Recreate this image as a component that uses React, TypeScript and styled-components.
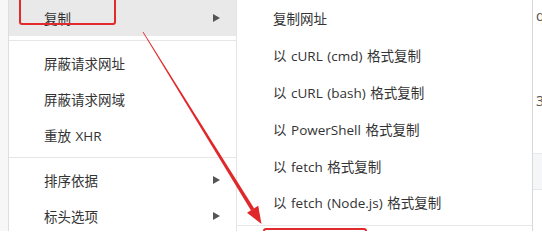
import React from "react";
import styled, { createGlobalStyle } from "styled-components";

const Global = createGlobalStyle`
  html, body { margin: 0; padding: 0; background: #fff; }
  body {
    width: 542px; height: 231px; overflow: hidden;
    font-family: "Segoe UI", "Open Sans", "Noto Sans CJK SC", sans-serif;
    font-size: 13.5px; color: #333;
  }
`;

const Page = styled.div`
  position: relative;
  display: flex;
  align-items: stretch;
  width: 542px;
  height: 231px;
  overflow: hidden;
  padding-left: 8px;
  box-sizing: border-box;
  background: #f7f7f7;
`;

const Menu = styled.div`
  width: 229px;
  background: #fff;
  border-left: 1px solid #dedede;
  border-right: 1px solid #e4e4e4;
  box-sizing: border-box;
  display: flex;
  flex-direction: column;
  overflow: hidden;
`;

const SubMenu = styled.div`
  width: 296px;
  background: #fff;
  border-right: 1px solid #d8d8d8;
  box-sizing: border-box;
  display: flex;
  flex-direction: column;
  overflow: hidden;
`;

const Row = styled.div<{ $active?: boolean; $h: number; $pad: number }>`
  height: ${(p) => p.$h}px;
  flex: none;
  display: flex;
  align-items: center;
  justify-content: space-between;
  padding: 0 16px 0 ${(p) => p.$pad}px;
  background: ${(p) => (p.$active ? "#e9e9e9" : "transparent")};
  white-space: nowrap;
  word-spacing: 1px;
`;

const Sep = styled.div`
  flex: none;
  height: 1px;
  margin: 4px 0;
  background: #e6e6e6;
`;

const Caret = styled.span`
  width: 0;
  height: 0;
  border-top: 4px solid transparent;
  border-bottom: 4px solid transparent;
  border-left: 7px solid #555;
`;

const Strip = styled.div`
  flex: 1;
  background: #fff;
  display: grid;
  grid-template-rows: 30px 40px 60px 23px 37px 1fr;
  overflow: hidden;
`;

const StripCell = styled.div<{ $shade?: boolean }>`
  padding-left: 3px;
  display: flex;
  align-items: center;
  color: #555;
  font-size: 14px;
  border-bottom: ${(p) => (p.$shade ? "1px solid #e8e8e8" : "none")};
  border-top: ${(p) => (p.$shade ? "1px solid #e8e8e8" : "none")};
  background: ${(p) => (p.$shade ? "#f5f6f8" : "transparent")};
`;

const RedBox = styled.div<{ $x: number; $y: number; $w: number; $h: number }>`
  position: absolute;
  left: ${(p) => p.$x}px;
  top: ${(p) => p.$y}px;
  width: ${(p) => p.$w}px;
  height: ${(p) => p.$h}px;
  border: 2px solid #e2292c;
  border-radius: 3px;
  box-sizing: border-box;
  pointer-events: none;
`;

const ArrowSvg = styled.svg`
  position: absolute;
  left: 0;
  top: 0;
  pointer-events: none;
`;

const leftItems: ({ label: string; sub?: boolean; active?: boolean } | "sep")[] = [
  { label: "复制", sub: true, active: true },
  "sep",
  { label: "屏蔽请求网址" },
  { label: "屏蔽请求网域" },
  { label: "重放 XHR" },
  "sep",
  { label: "排序依据", sub: true },
  { label: "标头选项", sub: true },
];

const subItems = [
  "复制网址",
  "以 cURL (cmd) 格式复制",
  "以 cURL (bash) 格式复制",
  "以 PowerShell 格式复制",
  "以 fetch 格式复制",
  "以 fetch (Node.js) 格式复制",
];

export default function App() {
  return (
    <>
      <Global />
      <Page>
        <Menu>
          {leftItems.map((it, i) =>
            it === "sep" ? (
              <Sep key={i} />
            ) : (
              <Row key={i} $h={36} $pad={35} $active={it.active}>
                <span>{it.label}</span>
                {it.sub && <Caret />}
              </Row>
            )
          )}
        </Menu>
        <SubMenu>
          {subItems.map((s, i) => (
            <Row key={i} $h={36.8} $pad={36}>
              <span>{s}</span>
            </Row>
          ))}
          <Sep />
        </SubMenu>
        <Strip>
          <StripCell>q</StripCell>
          <StripCell />
          <StripCell>3</StripCell>
          <StripCell />
          <StripCell $shade />
          <StripCell />
        </Strip>
        <RedBox $x={19} $y={-10} $w={97} $h={35} />
        <RedBox $x={263} $y={228} $w={104} $h={30} />
        <ArrowSvg width="542" height="231" viewBox="0 0 542 231">
          <polygon
            points="143.3,31.8 142.7,32.2 251,210.4 254.2,208.4"
            fill="#e0282a"
          />
          <polygon points="261.5,224 258.2,205.8 247,212.8" fill="#e0282a" />
        </ArrowSvg>
      </Page>
    </>
  );
}
